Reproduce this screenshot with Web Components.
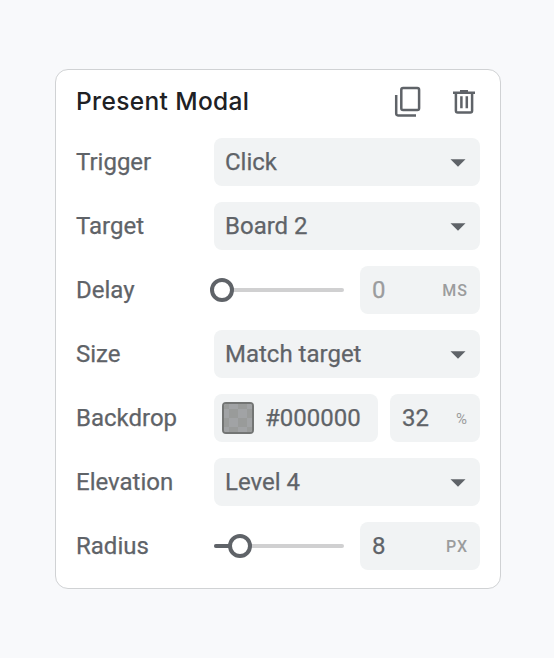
<!DOCTYPE html>
<html lang="en">
<head>
<meta charset="utf-8">
<title>Present Modal</title>
<style>
body{margin:0;background:#f8f9fb;font-family:Roboto,"Liberation Sans",sans-serif;color:#5f6368}
</style>
</head>
<body>
<modal-panel heading="Present Modal">
  <prop-row label="Trigger"><select-field>Click</select-field></prop-row>
  <prop-row label="Target"><select-field>Board 2</select-field></prop-row>
  <prop-row label="Delay"><range-slider value="0"></range-slider><unit-field muted unit="MS">0</unit-field></prop-row>
  <prop-row label="Size"><select-field>Match target</select-field></prop-row>
  <prop-row label="Backdrop"><color-field>#000000</color-field><unit-field class="small" unit="%">32</unit-field></prop-row>
  <prop-row label="Elevation"><select-field>Level 4</select-field></prop-row>
  <prop-row label="Radius"><range-slider value="18"></range-slider><unit-field unit="PX">8</unit-field></prop-row>
</modal-panel>
<script>
const define = (name, render) => customElements.define(name, class extends HTMLElement {
  connectedCallback() {
    if (!this.shadowRoot) this.attachShadow({ mode: 'open' }).innerHTML = render(this);
  }
});

define('copy-icon', () => `
<style>:host{display:block;width:28px;height:32px}svg{display:block}</style>
<svg width="28" height="32" viewBox="0 0 28 32" fill="none" stroke="#5f6368" stroke-width="2.5">
<rect x="7.3" y="2" width="17.8" height="22" rx="1.8"/><path d="M2.2 9V27.6q0 1.8 1.8 1.8h18"/></svg>`);

define('trash-icon', () => `
<style>:host{display:block;width:24px;height:28px}svg{display:block}</style>
<svg width="24" height="28" viewBox="0 0 24 28" fill="none" stroke="#5f6368" stroke-width="2.5">
<path d="M1 4.7h22M8 3.2h8" /><path d="M3.9 5v17.7q0 1.8 1.8 1.8h12.6q1.8 0 1.8-1.8V5M9.4 8.3v12M14.8 8.3v12"/></svg>`);

define('modal-panel', el => `
<style>
:host{display:flex;flex-direction:column;box-sizing:border-box;width:446px;height:520px;margin:69px 0 0 55px;padding:0 20px;background:#fff;border:1px solid #d0d2d4;border-radius:13px}
header{display:flex;align-items:flex-start;height:68px;flex:none}
h1{flex:1;margin:16px 0 0;font:500 24.5px/30px Inter,Roboto,sans-serif;letter-spacing:.36px;color:#202124}
copy-icon{margin:16px 30px 0 0}trash-icon{margin:18px 4px 0 0}
main{display:grid;gap:16px}
</style>
<header><h1>${el.getAttribute('heading')}</h1><copy-icon></copy-icon><trash-icon></trash-icon></header>
<main><slot></slot></main>`);

define('prop-row', el => `
<style>
:host{display:grid;grid-template-columns:138px 266px;height:48px;align-items:center;-webkit-text-stroke:.25px currentColor}
label{font-size:24px;line-height:48px}
div{display:flex;align-items:center;justify-content:space-between;height:48px}
</style>
<label>${el.getAttribute('label')}</label><div><slot></slot></div>`);

define('select-field', () => `
<style>
:host{display:flex;flex:1;align-items:center;justify-content:space-between;box-sizing:border-box;height:48px;padding:0 14px 0 11px;background:#f1f3f4;border-radius:8px;font-size:24px;line-height:48px}
svg{display:block;margin-top:1px}
</style>
<span><slot></slot></span><svg width="16" height="8" viewBox="0 0 16 8"><path d="M.5.2h15L8 7.7z" fill="#5f6368"/></svg>`);

define('unit-field', el => `
<style>
:host{display:flex;align-items:center;justify-content:space-between;box-sizing:border-box;width:120px;height:48px;padding:0 12px;background:#f1f3f4;border-radius:8px;font-size:24px;line-height:48px}
:host(.small){width:90px}
:host([muted]){color:#9b9c9d}
small{font-size:16px;letter-spacing:1px;color:#9b9c9d;font-weight:500;margin-top:1px;-webkit-text-stroke:0}
:host(.small) small{font-weight:400;font-size:15px;letter-spacing:0;margin-right:1px}
</style>
<span><slot></slot></span><small>${el.getAttribute('unit')}</small>`);

define('color-field', () => `
<style>
:host{display:flex;align-items:center;gap:11px;box-sizing:border-box;width:164px;height:48px;padding-left:8px;background:#f1f3f4;border-radius:8px;font-size:24px;line-height:48px}
i{box-sizing:border-box;width:32px;height:32px;border:2px solid #737574;border-radius:4px;background:repeating-conic-gradient(#a1a3a5 0 25%,#999b9a 0 50%) -4px -4px/18px 18px padding-box}
</style>
<i></i><span><slot></slot></span>`);

define('range-slider', el => {
  const v = +el.getAttribute('value');
  return `
<style>
:host{display:block;width:138px;height:24px;margin-left:-8px}
svg{display:block;overflow:visible}
</style>
<svg width="138" height="24" viewBox="0 0 138 24" fill="none" stroke-linecap="round" stroke-width="4">
<path d="M10 12h126" stroke="#d0d0d1"/>${v ? `<path d="M10 12h${v}" stroke="#5f6368"/>` : ''}
<circle cx="${v ? v + 16 : 16}" cy="12" r="10" fill="#fff" stroke="#5f6368"/></svg>`;
});
</script>
</body>
</html>
